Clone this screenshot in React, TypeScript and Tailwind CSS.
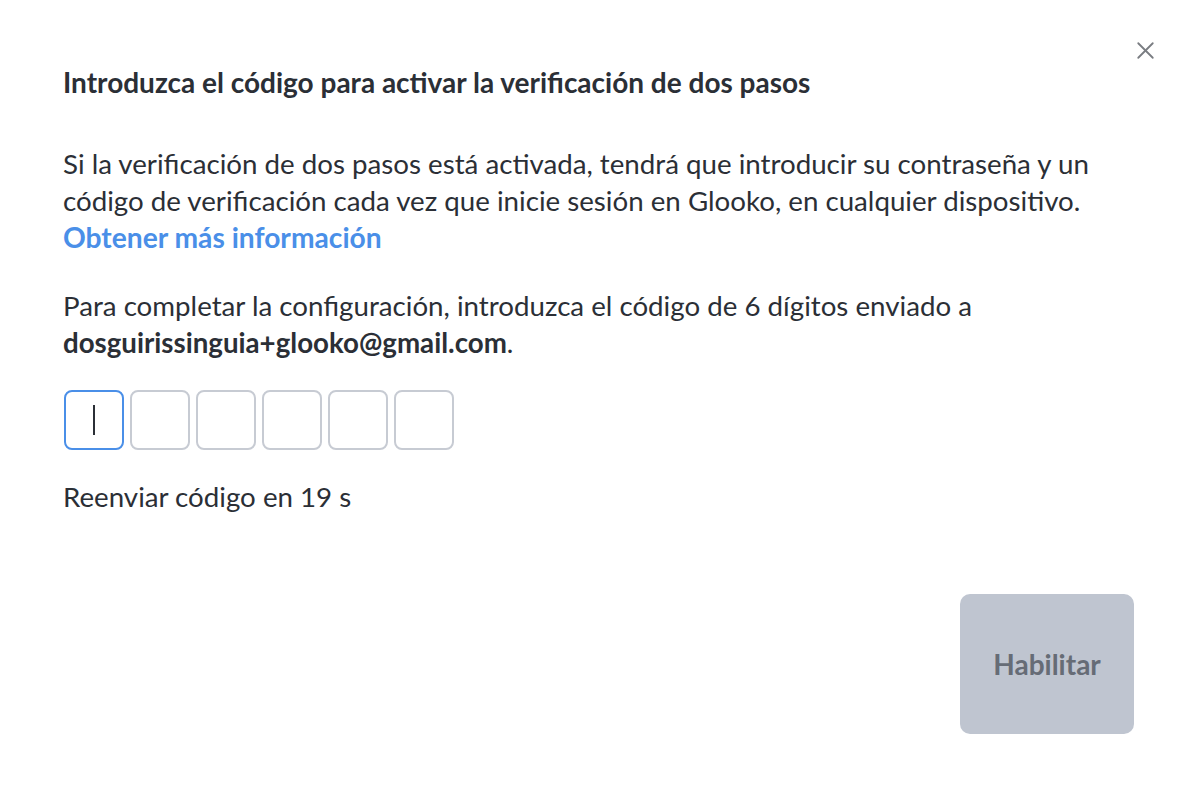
import React, { useState } from "react";
import { X } from "lucide-react";

const App: React.FC = () => {
  const [code] = useState(["", "", "", "", "", ""]);

  return (
    <div
      className="relative w-[1192px] h-[788px] bg-white text-[#2b2f36]"
      style={{ fontFamily: "Lato, 'Open Sans', sans-serif" }}
    >
      {/* Close button */}
      <button className="absolute right-[32px] top-[36px] text-[#7a7d82]">
        <X className="w-[29px] h-[29px]" strokeWidth={1.5} />
      </button>

      <div className="flex flex-col h-full pl-[63px] pr-[58px] pt-[66px] pb-[54px]">
        <h2 className="text-[28px] font-bold leading-[32px]">
          Introduzca el código para activar la verificación de dos pasos
        </h2>

        <p className="mt-[47px] text-[27.7px] leading-[37px]">
          Si la verificación de dos pasos está activada, tendrá que introducir
          su contraseña y un código de verificación cada vez que inicie sesión
          en Glooko, en cualquier dispositivo.
          <br />
          <a href="#" className="font-bold text-[28.2px] text-[#4a8fe8]">
            Obtener más información
          </a>
        </p>

        <p className="mt-[31px] text-[27.7px] leading-[37px]">
          Para completar la configuración, introduzca el código de 6 dígitos
          enviado a <strong className="font-bold">dosguirissinguia+glooko@gmail.com</strong>.
        </p>

        {/* Code inputs */}
        <div className="flex gap-[6px] mt-[29px] ml-[1px]">
          {code.map((digit, i) => (
            <div
              key={i}
              className={
                i === 0
                  ? "w-[60px] h-[60px] rounded-[8px] border-2 border-[#4a8fe8] flex items-center justify-center"
                  : "w-[60px] h-[60px] rounded-[8px] border-2 border-[#c7cbd3] flex items-center justify-center"
              }
            >
              {i === 0 ? <span className="w-[1.5px] h-[30px] bg-[#2b2f36]" /> : digit}
            </div>
          ))}
        </div>

        <p className="mt-[28px] text-[27.7px] leading-[37px]">Reenviar código en 19 s</p>

        <div className="mt-auto flex justify-end">
          <button
            disabled
            className="w-[174px] h-[140px] rounded-[10px] bg-[#bfc5d0] text-[#666c76] text-[28px] font-bold"
          >
            Habilitar
          </button>
        </div>
      </div>
    </div>
  );
};

export default App;
